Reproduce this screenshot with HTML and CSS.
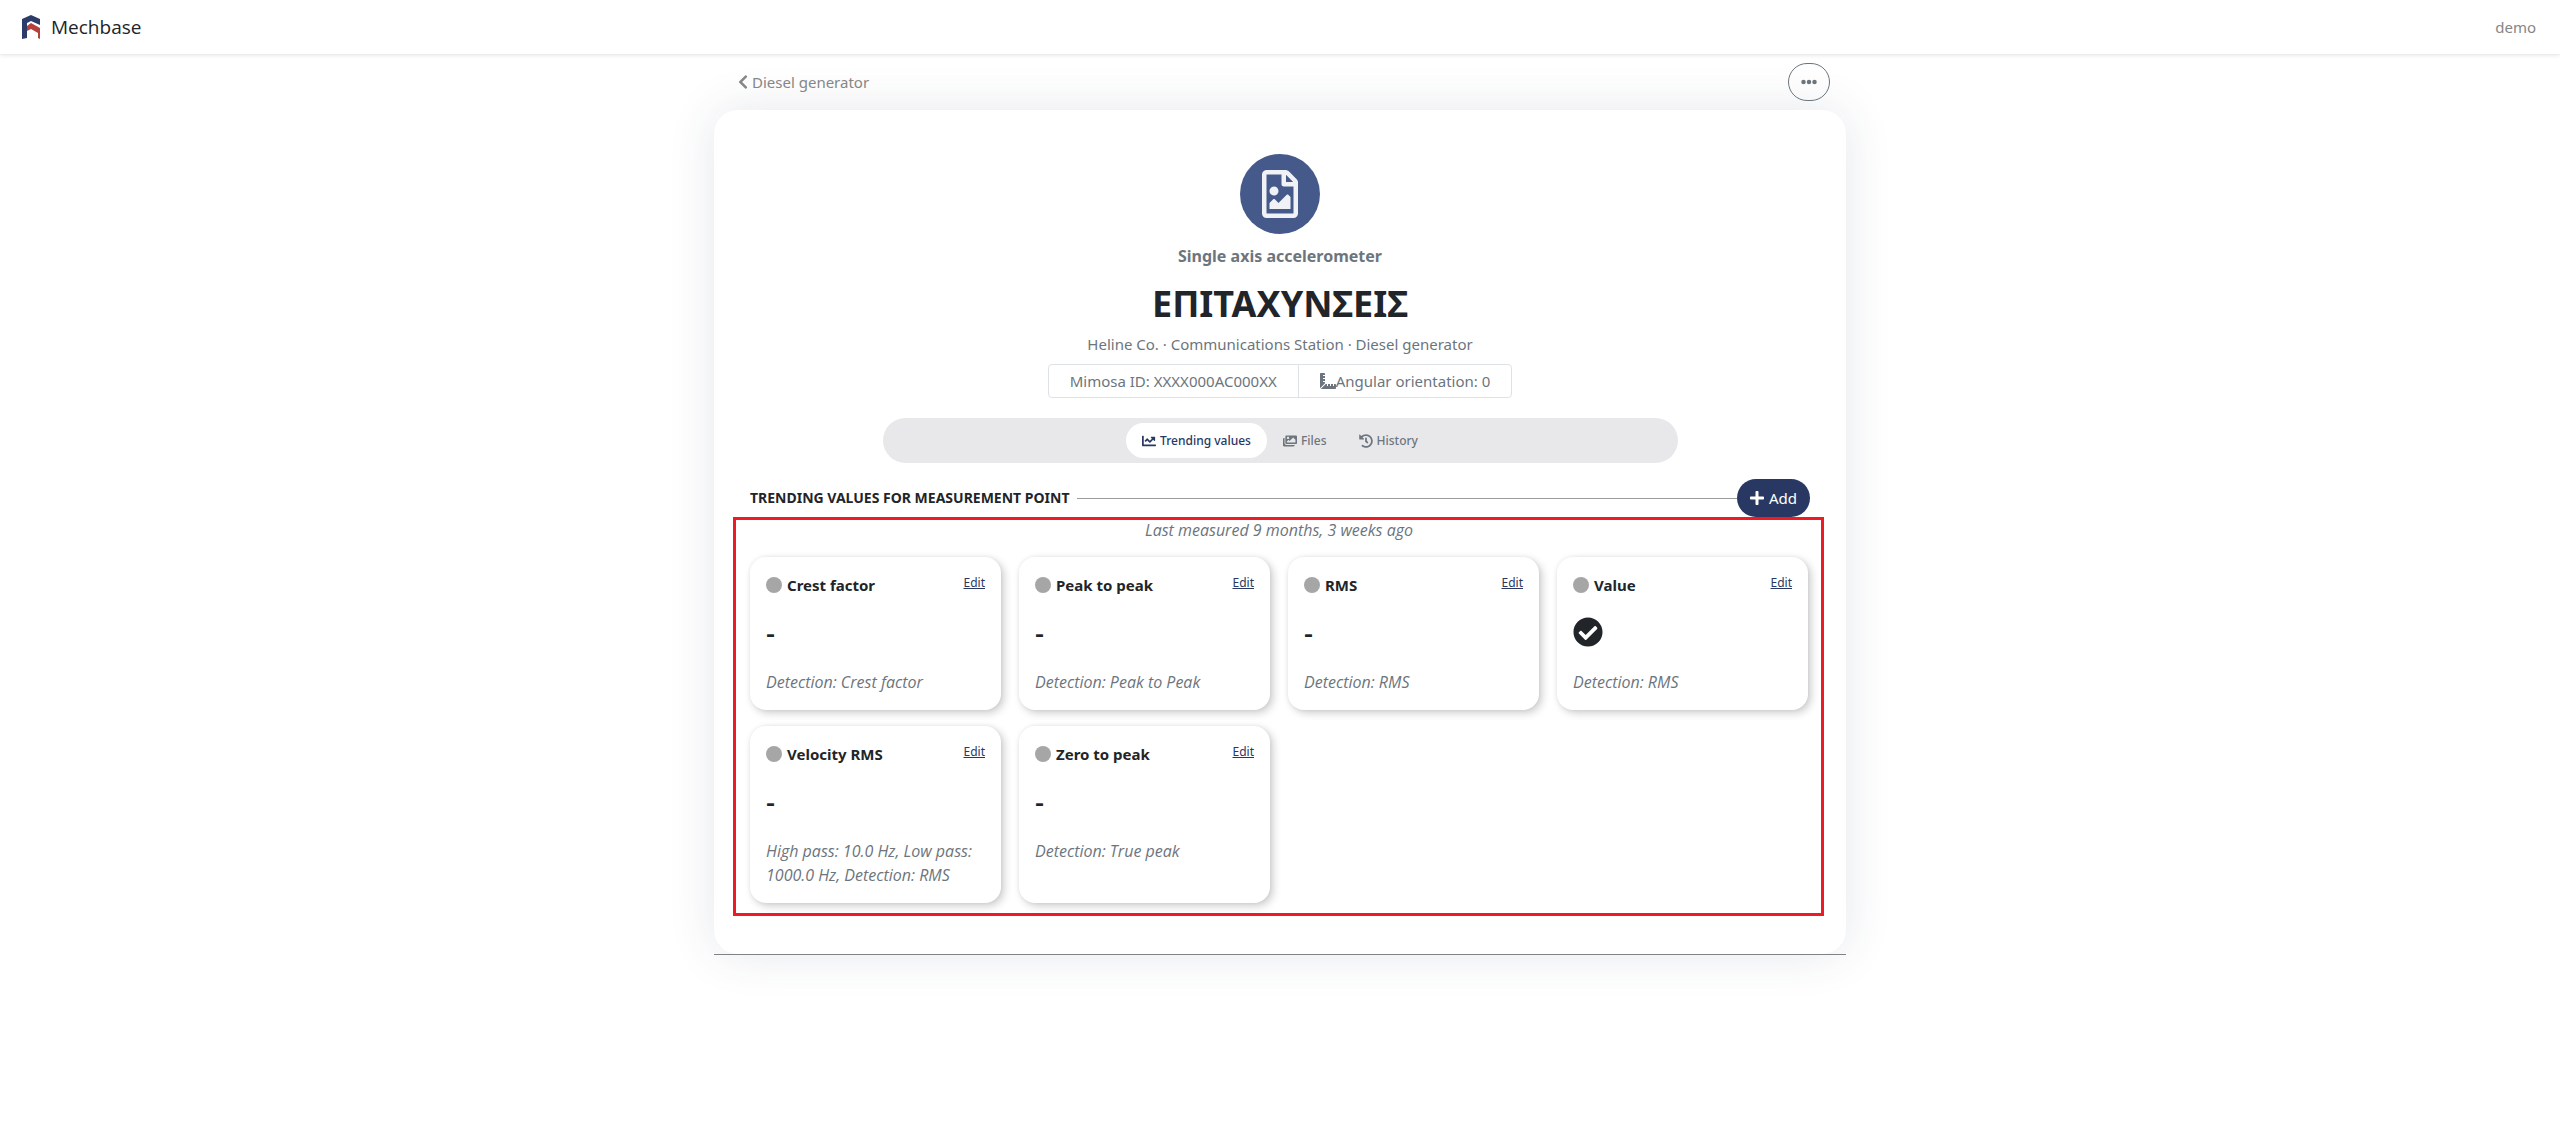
FILE: index.html
```
<!DOCTYPE html>
<html lang="en">
<head>
<meta charset="utf-8">
<meta name="viewport" content="width=device-width, initial-scale=1">
<title>Mechbase</title>
<link rel="stylesheet" href="styles.css">
</head>
<body>
<svg class="sprite" aria-hidden="true">
  <symbol id="chevron" viewBox="0 0 320 512"><path d="M34.5 239 228.900 44.700c9.400-9.400 24.600-9.400 33.900 0l22.700 22.700c9.400 9.400 9.400 24.500 0 33.900L131.500 256l154 154.800c9.300 9.400 9.300 24.500 0 33.900l-22.700 22.700c-9.400 9.400-24.600 9.400-33.900 0L34.500 273c-9.300-9.400-9.300-24.600 0-34z"/></symbol>
  <symbol id="dots" viewBox="0 0 512 512"><circle cx="256" cy="256" r="72"/><circle cx="80" cy="256" r="72"/><circle cx="432" cy="256" r="72"/></symbol>
  <symbol id="plus" viewBox="0 0 448 512"><path d="M416 208H272V64c0-17.700-14.300-32-32-32h-32c-17.700 0-32 14.300-32 32v144H32c-17.700 0-32 14.300-32 32v32c0 17.700 14.300 32 32 32h144v144c0 17.700 14.300 32 32 32h32c17.700 0 32-14.300 32-32V304h144c17.700 0 32-14.300 32-32v-32c0-17.700-14.300-32-32-32z"/></symbol>
  <symbol id="file-image" viewBox="0 0 384 512"><path d="M369.900 97.900 286 14C277 5 264.800-.1 252.100-.1H48C21.500 0 0 21.500 0 48v416c0 26.500 21.500 48 48 48h288c26.500 0 48-21.500 48-48V131.900c0-12.700-5.100-25-14.100-34zM332.100 128H256V51.900l76.100 76.100zM48 464V48h160v104c0 13.300 10.700 24 24 24h104v288H48zm32-48h224V288l-23.500-23.500c-4.700-4.700-12.300-4.700-17 0L176 352l-39.500-39.500c-4.700-4.700-12.300-4.700-17 0L80 352v64zm48-240c-26.500 0-48 21.500-48 48s21.500 48 48 48 48-21.500 48-48-21.500-48-48-48z"/></symbol>
  <symbol id="chart" viewBox="0 0 512 512"><path d="M496 384H64V80c0-8.800-7.200-16-16-16H16C7.200 64 0 71.200 0 80v336c0 17.700 14.300 32 32 32h464c8.800 0 16-7.200 16-16v-32c0-8.800-7.200-16-16-16zM464 96H345.900c-21.400 0-32.100 25.900-17 41l32.400 32.400L288 242.700l-73.400-73.400c-12.500-12.500-32.800-12.500-45.300 0l-68.700 68.700c-6.200 6.200-6.200 16.400 0 22.600l22.600 22.600c6.200 6.200 16.400 6.200 22.600 0l46.100-46 73.400 73.400c12.500 12.500 32.800 12.500 45.300 0l96-96 32.400 32.400c15.100 15.100 41 4.400 41-17V112c0-8.800-7.200-16-16-16z"/></symbol>
  <symbol id="images" viewBox="0 0 576 512"><path d="M480 416v16c0 26.500-21.500 48-48 48H48c-26.500 0-48-21.500-48-48V176c0-26.500 21.500-48 48-48h16v208c0 44.100 35.900 80 80 80h336zm96-80V80c0-26.500-21.500-48-48-48H144c-26.500 0-48 21.500-48 48v256c0 26.500 21.500 48 48 48h384c26.500 0 48-21.500 48-48zM256 128c0 26.500-21.500 48-48 48s-48-21.500-48-48 21.500-48 48-48 48 21.500 48 48zm-96 144 55.500-55.500c4.700-4.700 12.300-4.700 17 0L272 256l135.500-135.500c4.700-4.700 12.300-4.700 17 0L512 208v112H160v-48z"/></symbol>
  <symbol id="history" viewBox="0 0 512 512"><path d="M504 255.500c.3 136.600-111.200 248.400-247.800 248.500-59 0-113.200-20.500-155.800-54.900-11.100-8.900-11.900-25.500-1.800-35.600l11.300-11.300c8.600-8.600 22.400-9.600 31.900-2C173.100 425.100 212.900 440 256 440c101.700 0 184-82.300 184-184 0-101.700-82.300-184-184-184-48.800 0-93.100 19-126.100 49.900l50.800 50.800c10.100 10.100 2.900 27.300-11.300 27.300H24c-8.800 0-16-7.200-16-16V38.600c0-14.300 17.200-21.400 27.300-11.300l49.400 49.400C129.200 34.100 189.600 8 256 8c136.800 0 247.700 110.800 248 247.500zM323.100 334l9.800-12.600c8.100-10.500 6.300-25.500-4.200-33.700L288 256.300V152c0-13.300-10.700-24-24-24h-16c-13.300 0-24 10.700-24 24v135.700l65.400 50.900c10.500 8.100 25.500 6.300 33.700-4.600z"/></symbol>
  <symbol id="ruler" viewBox="0 0 512 512"><path d="M160 288h-56c-4.400 0-8-3.600-8-8v-16c0-4.400 3.600-8 8-8h56v-64h-56c-4.400 0-8-3.600-8-8v-16c0-4.400 3.600-8 8-8h56V96h-56c-4.400 0-8-3.600-8-8V72c0-4.400 3.600-8 8-8h56V32c0-17.700-14.300-32-32-32H32C14.300 0 0 14.300 0 32v448c0 2.800.9 5.300 1.600 7.800L160 329.400V288zm320 64h-32v56c0 4.400-3.600 8-8 8h-16c-4.400 0-8-3.600-8-8v-56h-64v56c0 4.400-3.600 8-8 8h-16c-4.400 0-8-3.600-8-8v-56h-64v56c0 4.400-3.600 8-8 8h-16c-4.400 0-8-3.600-8-8v-56h-41.400L24.200 510.400c2.500.7 5 1.600 7.800 1.600h448c17.700 0 32-14.300 32-32v-96c0-17.700-14.300-32-32-32z"/></symbol>
  <symbol id="check" viewBox="0 0 512 512"><path d="M504 256c0 137-111 248-248 248S8 393 8 256 119 8 256 8s248 111 248 248zM227.300 387.300l184-184c6.200-6.200 6.200-16.400 0-22.600l-22.600-22.600c-6.200-6.200-16.400-6.200-22.600 0L216 308.100l-70.100-70.100c-6.200-6.200-16.400-6.200-22.600 0l-22.600 22.600c-6.200 6.200-6.200 16.400 0 22.600l104 104c6.200 6.300 16.400 6.300 22.600.1z"/></symbol>
</svg>

<header class="navbar">
  <a class="brand" href="#">
    <svg class="brand-mark" viewBox="0 0 20 26" aria-hidden="true">
      <path fill="#2b3c69" d="M1 5 10 1l9 4v6l-9-4-4 2v15l-5 1z"/>
      <path fill="#b5413a" d="M6 12l4-3 9 5v11l-2-1v-5l-7-4-4 2z"/>
    </svg>
    <span>Mechbase</span>
  </a>
  <a class="user" href="#">demo</a>
</header>

<main class="page">
  <div class="toolbar">
    <a class="back" href="#"><svg class="icon-chevron"><use href="#chevron"/></svg>Diesel generator</a>
    <button class="more" type="button" aria-label="More actions"><svg class="icon-dots"><use href="#dots"/></svg></button>
  </div>

  <section class="panel">
    <div class="summary">
      <div class="avatar"><svg class="icon-file"><use href="#file-image"/></svg></div>
      <p class="kind">Single axis accelerometer</p>
      <h1 class="title">ΕΠΙΤΑΧΥΝΣΕΙΣ</h1>
      <p class="path">Heline Co. · Communications Station · Diesel generator</p>
      <ul class="facts">
        <li>Mimosa ID: XXXX000AC000XX</li>
        <li><svg class="icon-ruler"><use href="#ruler"/></svg>Angular orientation: 0</li>
      </ul>
    </div>

    <nav class="tabs">
      <a class="tab tab-active" href="#"><svg class="icon-tab"><use href="#chart"/></svg>Trending values</a>
      <a class="tab" href="#"><svg class="icon-tab"><use href="#images"/></svg>Files</a>
      <a class="tab" href="#"><svg class="icon-tab"><use href="#history"/></svg>History</a>
    </nav>

    <div class="trends">
      <div class="section-head">
        <h2 class="section-title">Trending values for measurement point</h2>
        <button class="add" type="button"><svg class="icon-plus"><use href="#plus"/></svg>Add</button>
      </div>

      <div class="values">
        <p class="measured">Last measured 9 months, 3 weeks ago</p>
        <div class="grid">
          <article class="card">
            <header class="card-head"><span class="dot"></span><h3 class="card-title">Crest factor</h3><a class="edit" href="#">Edit</a></header>
            <p class="reading">-</p>
            <p class="note">Detection: Crest factor</p>
          </article>
          <article class="card">
            <header class="card-head"><span class="dot"></span><h3 class="card-title">Peak to peak</h3><a class="edit" href="#">Edit</a></header>
            <p class="reading">-</p>
            <p class="note">Detection: Peak to Peak</p>
          </article>
          <article class="card">
            <header class="card-head"><span class="dot"></span><h3 class="card-title">RMS</h3><a class="edit" href="#">Edit</a></header>
            <p class="reading">-</p>
            <p class="note">Detection: RMS</p>
          </article>
          <article class="card">
            <header class="card-head"><span class="dot"></span><h3 class="card-title">Value</h3><a class="edit" href="#">Edit</a></header>
            <p class="reading"><svg class="icon-check"><use href="#check"/></svg></p>
            <p class="note">Detection: RMS</p>
          </article>
          <article class="card">
            <header class="card-head"><span class="dot"></span><h3 class="card-title">Velocity RMS</h3><a class="edit" href="#">Edit</a></header>
            <p class="reading">-</p>
            <p class="note">High pass: 10.0 Hz, Low pass: 1000.0 Hz, Detection: RMS</p>
          </article>
          <article class="card">
            <header class="card-head"><span class="dot"></span><h3 class="card-title">Zero to peak</h3><a class="edit" href="#">Edit</a></header>
            <p class="reading">-</p>
            <p class="note">Detection: True peak</p>
          </article>
        </div>
      </div>
    </div>
  </section>
  <hr class="rule">
</main>
</body>
</html>
```
FILE: styles.css
```
* {
  box-sizing: border-box;
}

body {
  min-height: 100vh;
  margin: 0;
  background: #fff;
  color: #212529;
  font-family: "Noto Sans", "Open Sans", sans-serif;
  font-size: 15px;
  line-height: 24px;
}

h1, h2, h3, p, ul {
  margin: 0;
  padding: 0;
}

a {
  color: inherit;
  text-decoration: none;
}

button {
  font: inherit;
  cursor: pointer;
}

svg {
  fill: currentColor;
  flex: none;
}

.sprite {
  display: none;
}

.navbar {
  position: relative;
  display: flex;
  align-items: center;
  justify-content: space-between;
  height: 54px;
  padding: 0 24px 0 21px;
  background: #fff;
  box-shadow: 0 2px 4px rgba(0, 0, 0, 0.08), 0 0 2px rgba(0, 0, 0, 0.06);
}

.brand {
  display: flex;
  align-items: center;
  gap: 10px;
  font-family: "Open Sans", sans-serif;
  font-size: 19px;
}

.brand-mark {
  width: 20px;
  height: 26px;
}

.user {
  color: #868686;
}

.page {
  max-width: 1132px;
  margin: 0 auto;
}

.toolbar {
  position: relative;
  z-index: 1;
  display: flex;
  align-items: center;
  justify-content: space-between;
  height: 56px;
  padding: 0 16px 0 24px;
}

.back {
  display: flex;
  align-items: center;
  gap: 4px;
  color: #868686;
}

.icon-chevron {
  width: 10px;
  height: 16px;
}

.more {
  display: grid;
  place-items: center;
  width: 42px;
  height: 38px;
  padding: 0;
  border: 1px solid #6c757d;
  border-radius: 19px;
  background: transparent;
  color: #6c757d;
}

.icon-dots {
  width: 16px;
  height: 16px;
}

.panel {
  padding: 44px 19px 38px;
  border-radius: 24px;
  background: #fff;
  box-shadow: 0 0 48px rgba(40, 60, 90, 0.12);
}

.summary {
  display: flex;
  flex-direction: column;
  align-items: center;
  color: #6c757d;
}

.avatar {
  display: grid;
  place-items: center;
  width: 80px;
  height: 80px;
  border-radius: 50%;
  background: #455a8a;
  color: #f1f2f6;
}

.icon-file {
  width: 36px;
  height: 48px;
}

.kind {
  margin-top: 10px;
  font-size: 16px;
  font-weight: 700;
}

.title {
  margin-top: 12px;
  color: #212529;
  font-size: 36px;
  font-weight: 700;
  line-height: 48px;
}

.path {
  margin-top: 4px;
}

.facts {
  display: flex;
  margin-top: 8px;
  border: 1px solid #dee2e6;
  border-radius: 4px;
  list-style: none;
}

.facts li {
  display: flex;
  align-items: center;
  height: 32px;
  padding: 0 21px;
}

.facts li + li {
  border-left: 1px solid #dee2e6;
}

.icon-ruler {
  width: 16px;
  height: 16px;
}

.tabs {
  display: flex;
  align-items: center;
  justify-content: center;
  max-width: 795px;
  height: 45px;
  margin: 20px auto 16px;
  border-radius: 23px;
  background: #e8e8ea;
  color: #6c757d;
  font-size: 12px;
  font-weight: 500;
}

.tab {
  display: flex;
  align-items: center;
  gap: 4px;
  height: 35px;
  padding: 0 16px;
  border-radius: 18px;
}

.tab-active {
  background: #fff;
  color: #283863;
}

.icon-tab {
  width: 14px;
  height: 14px;
}

.trends {
  padding-right: 3px;
}

.section-head {
  display: flex;
  align-items: center;
  padding: 0 14px 0 17px;
}

.section-title {
  display: flex;
  flex: 1;
  align-items: center;
  gap: 8px;
  font-size: 14px;
  font-weight: 700;
  text-transform: uppercase;
}

.section-title::after {
  flex: 1;
  height: 1px;
  background: #9c9c9c;
  content: "";
}

.add {
  display: flex;
  align-items: center;
  gap: 5px;
  height: 38px;
  padding: 0 13px;
  border: 0;
  border-radius: 19px;
  background: #283863;
  color: #fff;
}

.icon-plus {
  width: 14px;
  height: 16px;
}

.values {
  padding: 0 13px 10px 14px;
  border: 3px solid #ed1c24;
}

.measured,
.note {
  color: #6c757d;
  font-family: "Open Sans", sans-serif;
  font-size: 16px;
  font-style: italic;
}

.measured {
  margin-bottom: 17px;
  line-height: 20px;
  text-align: center;
}

.grid {
  display: grid;
  grid-template-columns: repeat(4, 1fr);
  gap: 16px 18px;
}

.card {
  padding: 16px;
  border-radius: 16px;
  background: #fff;
  box-shadow: 3px 3px 8px rgba(0, 0, 0, 0.2), 0 0 4px rgba(0, 0, 0, 0.06);
}

.card-head {
  display: flex;
  align-items: center;
  gap: 5px;
}

.dot {
  width: 16px;
  height: 16px;
  border-radius: 50%;
  background: #a6a6a6;
}

.card-title {
  flex: 1;
  font-size: 15px;
  font-weight: 700;
}

.edit {
  align-self: flex-start;
  color: #283863;
  font-size: 12px;
  line-height: 20px;
  text-decoration: underline;
}

.reading {
  display: flex;
  align-items: center;
  height: 40px;
  margin: 15px 0 18px;
  font-size: 28px;
  font-weight: 500;
}

.icon-check {
  width: 30px;
  height: 30px;
}

.rule {
  height: 1px;
  margin: 0;
  border: 0;
  background: #808285;
}
```
